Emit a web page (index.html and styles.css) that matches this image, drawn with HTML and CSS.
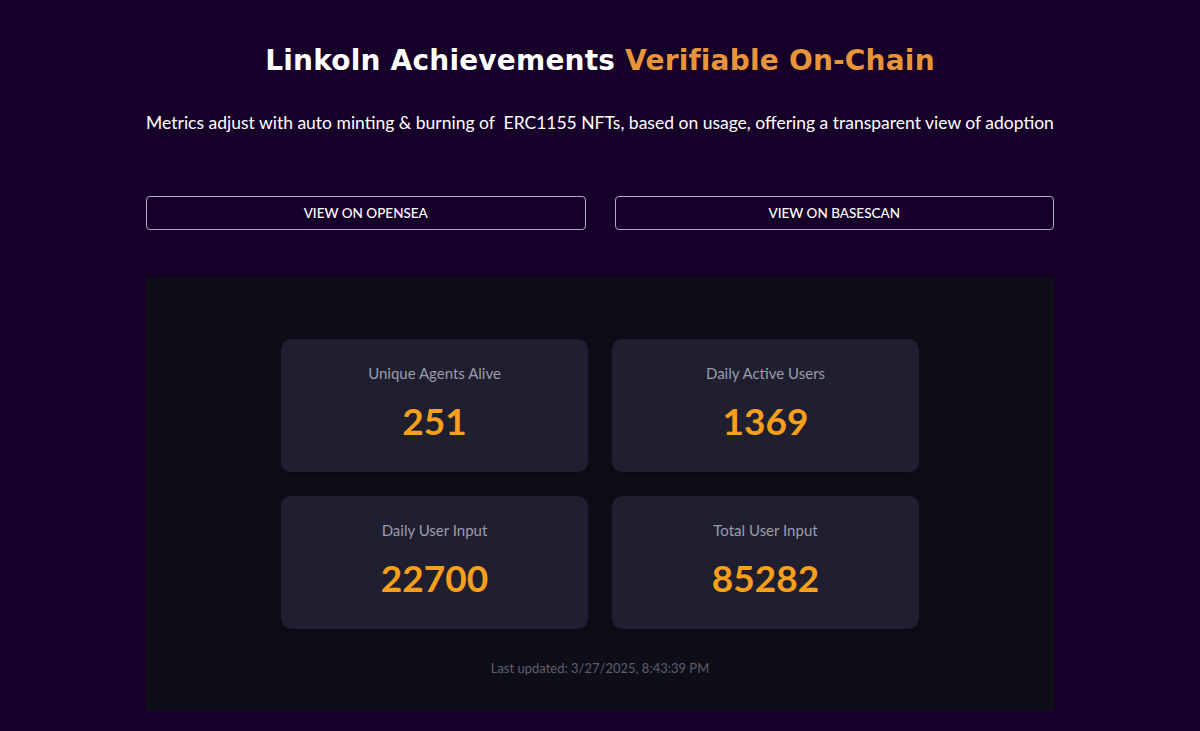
FILE: index.html
```html
<!DOCTYPE html>
<html lang="en">
<head>
<meta charset="utf-8">
<title>Linkoln Achievements</title>
<link rel="stylesheet" href="styles.css">
</head>
<body>
<main class="page">
  <h1 class="title">Linkoln Achievements <span class="accent">Verifiable On-Chain</span></h1>
  <p class="subtitle">Metrics adjust with auto minting &amp; burning of&nbsp; ERC1155 NFTs, based on usage, offering a transparent view of adoption</p>
  <div class="actions">
    <a class="btn" href="#">VIEW ON OPENSEA</a>
    <a class="btn" href="#">VIEW ON BASESCAN</a>
  </div>
  <section class="panel">
    <div class="grid">
      <div class="card"><div class="label">Unique Agents Alive</div><div class="value">251</div></div>
      <div class="card"><div class="label">Daily Active Users</div><div class="value">1369</div></div>
      <div class="card"><div class="label">Daily User Input</div><div class="value">22700</div></div>
      <div class="card"><div class="label">Total User Input</div><div class="value">85282</div></div>
    </div>
    <p class="updated">Last updated: 3/27/2025, 8:43:39 PM</p>
  </section>
</main>
</body>
</html>
```
FILE: styles.css
```css
html, body {
  margin: 0;
  padding: 0;
  background: #16002a;
  color: #ffffff;
  font-family: Lato, "Open Sans", sans-serif;
}
.page {
  width: 908px;
  margin: 0 auto;
  padding-top: 41px;
  padding-bottom: 20px;
}
.title {
  margin: 0;
  text-align: center;
  font-family: "DejaVu Sans", sans-serif;
  font-weight: 700;
  font-size: 28px;
  line-height: 40px;
  letter-spacing: 0.2px;
  color: #ffffff;
}
.accent { color: #e8953a; }
.subtitle {
  margin: 29px 0 0;
  text-align: center;
  font-size: 17.5px;
  line-height: 26px;
  color: #ffffff;
}
.actions {
  display: flex;
  gap: 29px;
  margin-top: 60px;
}
.btn {
  flex: 1;
  height: 32px;
  display: flex;
  align-items: center;
  justify-content: center;
  border: 1px solid #b7a6c8;
  border-radius: 4px;
  color: #ffffff;
  text-decoration: none;
  font-size: 13.5px;
  font-weight: 500;
}
.panel {
  margin-top: 47px;
  background: #0d0e18;
  padding: 62px 0 34px;
  display: flex;
  flex-direction: column;
  align-items: center;
}
.grid {
  display: grid;
  grid-template-columns: 307px 307px;
  gap: 24px;
}
.card {
  height: 133px;
  background: #1f1f30;
  border-radius: 10px;
  box-shadow: 0 2px 8px rgba(0,0,0,0.35);
  display: flex;
  flex-direction: column;
  align-items: center;
  box-sizing: border-box;
  padding-top: 24px;
}
.label {
  font-size: 15px;
  line-height: 20px;
  color: #9c9cab;
}
.value {
  margin-top: 16px;
  font-size: 37px;
  line-height: 44px;
  font-weight: 700;
  color: #f8a01c;
}
.updated {
  margin: 30px 0 0;
  font-size: 13px;
  line-height: 18px;
  color: #5e5e6e;
}
```
